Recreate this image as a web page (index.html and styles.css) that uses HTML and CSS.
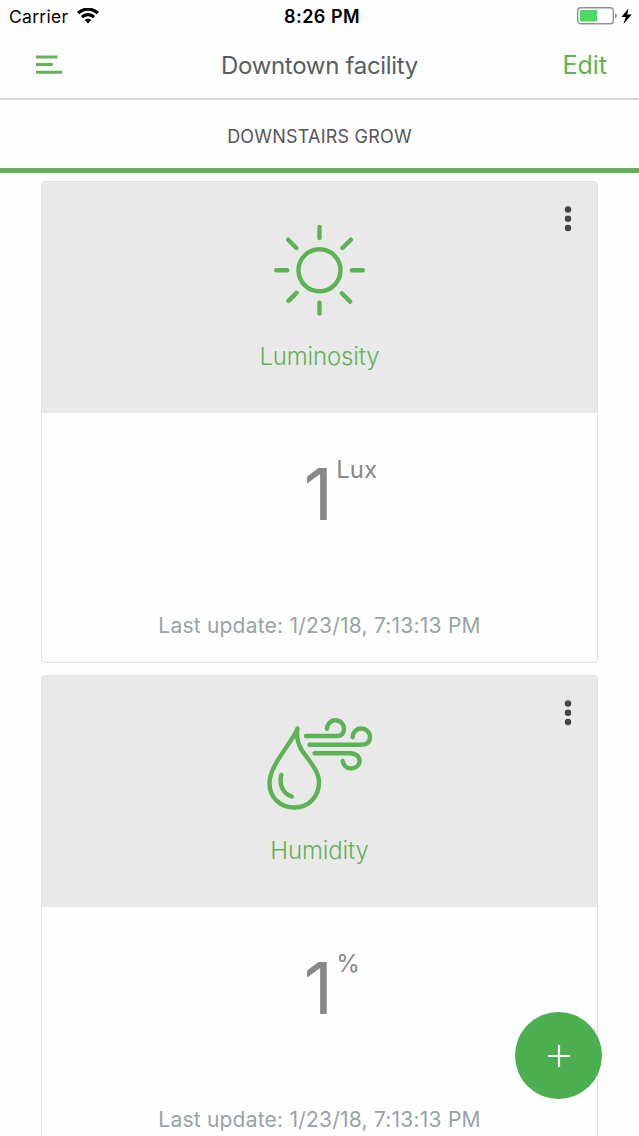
FILE: index.html
```html
<!DOCTYPE html>
<html lang="en">
<head>
<meta charset="utf-8">
<title>Downtown facility</title>
<link rel="stylesheet" href="styles.css">
</head>
<body>
<div class="screen">
  <div class="status">
    <div class="carrier"><span>Carrier</span>
      <svg width="22" height="16" viewBox="0 0 22 16"><g fill="none" stroke="#000" stroke-width="3.300"><path d="M1.200 5.200a14 14 0 0 1 19.600 0"/><path d="M4.900 9.100a8.700 8.700 0 0 1 12.200 0"/></g><path d="M7.600 12a4.900 4.900 0 0 1 6.800 0L11 15.500z"/></svg>
    </div>
    <div class="clock">8:26 PM</div>
    <div class="power">
      <svg width="55" height="20" viewBox="0 0 55 20"><rect x=".7" y="1.700" width="35.600" height="16" rx="3" fill="#fff" stroke="#929294" stroke-width="1.400"/><rect x="3" y="4" width="17" height="11.500" rx="1" fill="#4cd964"/><path d="M38 7.200q2 .8 2 2.600t-2 2.600z" fill="#929294"/><path d="M51.300 2.500 44.500 11h4.200l-2.200 7L54.800 8.500h-4.500z"/></svg>
    </div>
  </div>
  <header class="nav">
    <svg class="menu" width="26" height="19" viewBox="0 0 26 19"><path d="M0 1.900h21.500M0 9.500h16.700M0 17.300h26" stroke="#65b356" stroke-width="3"/></svg>
    <h1>Downtown facility</h1>
    <span class="edit">Edit</span>
  </header>
  <div class="tab"><span>DOWNSTAIRS GROW</span></div>
  <main class="cards">
    <section class="card">
      <div class="card-head">
        <svg class="dots" width="8" height="26" viewBox="0 0 8 26" fill="#454545"><circle cx="4" cy="3.500" r="3.200"/><circle cx="4" cy="12.700" r="3.200"/><circle cx="4" cy="22" r="3.200"/></svg>
        <svg class="icon" width="110" height="96" viewBox="0 0 110 96" fill="none" stroke="#5bb353" stroke-width="4.400" stroke-linecap="round"><circle cx="54.500" cy="48.300" r="21"/><path d="M54.500 5v11M54.500 80.600v11M11.200 48.300h11M86.800 48.300h11M23.200 17.700l8.200 8.300M85.800 17.700l-8.300 8.300M23.500 78.900l8-8M85.100 79.600l-8.300-8.300"/></svg>
        <h2>Luminosity</h2>
      </div>
      <div class="card-body">
        <div class="reading"><span class="value">1</span><span class="unit">Lux</span></div>
        <p class="updated">Last update: 1/23/18, 7:13:13 PM</p>
      </div>
    </section>
    <section class="card">
      <div class="card-head">
        <svg class="dots" width="8" height="26" viewBox="0 0 8 26" fill="#454545"><circle cx="4" cy="3.500" r="3.200"/><circle cx="4" cy="12.700" r="3.200"/><circle cx="4" cy="22" r="3.200"/></svg>
        <svg class="icon" width="110" height="96" viewBox="0 0 110 96" fill="none" stroke="#5bb353" stroke-width="4.400" stroke-linecap="round" stroke-linejoin="round"><path d="M32.500 12.500C27 27 4.500 49 4.500 67C4.500 82 15.500 91.500 29.500 91.500S54 81 54 66C54 54 41.500 42 36 33C32.500 26 31.500 18 32.500 12.500z"/><path d="M16.300 59C14 68.500 17.500 77.500 26.700 80.500M41 20h31C77 20 79 16.500 79 12.700A8.500 8.500 0 0 0 62 12.700M44.500 28.700h52C102.500 28.700 105 25.500 105 21A8.700 8.700 0 0 0 87.600 21.300M49.500 37.300h35C91.500 37.300 94.700 41 94.700 45.500A8.600 8.600 0 0 1 77.700 45"/></svg>
        <h2>Humidity</h2>
      </div>
      <div class="card-body">
        <div class="reading"><span class="value">1</span><span class="unit">%</span></div>
        <p class="updated">Last update: 1/23/18, 7:13:13 PM</p>
      </div>
    </section>
  </main>
  <div class="fab"><svg width="22" height="22" viewBox="0 0 22 22"><path d="M11 0v22M0 11h22" stroke="#fff" stroke-width="2.200"/></svg></div>
</div>
</body>
</html>
```
FILE: styles.css
```css
* { box-sizing: border-box; margin: 0; }
body { background: #fefefe; font-family: Inter, "Liberation Sans", sans-serif; }
svg { display: block; }
.screen { position: relative; width: 639px; height: 1136px; overflow: hidden; }
.status { display: grid; grid-template-columns: 1fr auto 1fr; align-items: center; height: 32px; padding: 0 7px 0 9px; color: #000; }
.carrier { display: flex; align-items: center; gap: 9px; font-size: 17.500px; letter-spacing: .3px; }
.carrier svg { margin-top: -1px; }
.clock { font-size: 18px; font-weight: 600; letter-spacing: .5px; padding-left: 3px; }
.power { display: flex; justify-content: flex-end; }
.power svg { margin-top: -1px; }
.nav { display: grid; grid-template-columns: 1fr auto 1fr; align-items: center; height: 68px; padding: 0 32px 0 36px; border-bottom: 2px solid #d7d7d8; }
.menu { margin-top: -2px; }
.nav h1 { font-size: 24px; font-weight: 400; letter-spacing: -.3px; color: #536062; position: relative; left: -2px; }
.edit { justify-self: end; font-size: 25px; color: #5fb350; }
.tab { display: flex; align-items: center; justify-content: center; height: 73px; border-bottom: 5px solid #67ae5a; font-size: 18px; letter-spacing: .2px; color: #555; padding-top: 5px; }
.cards { display: flex; flex-direction: column; gap: 12px; padding: 8px 41px 0; }
.card { flex: none; height: 482px; border: 1px solid #e1e1e2; border-radius: 4px; overflow: hidden; background: #fefefe; }
.card-head { position: relative; display: flex; flex-direction: column; align-items: center; height: 231px; padding-top: 40px; background: #e9e9e9; }
.dots { position: absolute; top: 24px; right: 25px; }
.card h2 { margin-top: 24px; font-size: 24px; line-height: 30px; font-weight: 300; letter-spacing: -.15px; color: #61b255; }
.card-body { display: flex; flex-direction: column; align-items: center; height: 249px; padding-top: 40px; }
.reading { display: flex; align-items: flex-start; height: 158px; padding-right: 2px; color: #88888a; }
.value { font-size: 72px; line-height: 82px; font-weight: 400; }
.unit { width: 0; white-space: nowrap; margin-right: -3px; padding-left: 3px; box-sizing: content-box; font-size: 24px; line-height: 34px; }
.updated { font-size: 21px; line-height: 30px; letter-spacing: .22px; color: #98a3a6; }
.fab { position: absolute; left: 515px; top: 1012px; width: 87px; height: 87px; border-radius: 50%; background: #4bae4f; display: flex; align-items: center; justify-content: center; }
```
